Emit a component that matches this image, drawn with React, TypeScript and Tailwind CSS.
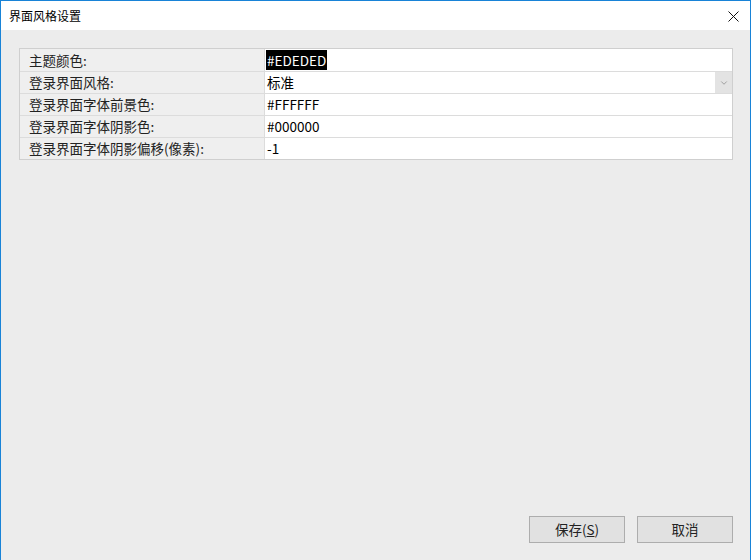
import { ChevronDown } from 'lucide-react'

const rows = [
  { label: '主题颜色:', value: '#EDEDED', selected: true },
  { label: '登录界面风格:', value: '标准', select: true },
  { label: '登录界面字体前景色:', value: '#FFFFFF' },
  { label: '登录界面字体阴影色:', value: '#000000' },
  { label: '登录界面字体阴影偏移(像素):', value: '-1' },
]

const font = { fontFamily: '"Microsoft YaHei", "Noto Sans CJK SC", sans-serif' }

export default function App() {
  return (
    <div className="w-[751px] h-[560px] flex flex-col border border-b-0 border-[#1883d7] bg-[#ececec] text-black" style={font}>
      <div className="h-[29px] bg-white flex items-center justify-between pl-2 pr-[11px] shrink-0">
        <span className="text-[12px]">界面风格设置</span>
        <svg width="11" height="11" viewBox="0 0 11 11" className="mt-[1px]">
          <path d="M0.5 0.5 L10.5 10.5 M10.5 0.5 L0.5 10.5" stroke="#111" strokeWidth="1" />
        </svg>
      </div>
      <div className="flex-1 flex flex-col pt-[18px] pl-[18px] pr-[17px] pb-[17px]">
        <div className="border border-[#cfcfcf] flex flex-col">
          {rows.map((r, i) => (
            <div key={r.label} className={`flex h-[22px] ${i > 0 ? 'border-t border-[#dcdcdc]' : ''}`}>
              <div className="w-[245px] shrink-0 bg-[#efefef] border-r border-[#dcdcdc] flex items-center pl-[9px] text-[13.5px] text-[#222]">
                {r.label}
              </div>
              <div className="flex-1 bg-white flex items-center text-[13.5px] relative">
                {r.selected ? (
                  <span className="bg-black text-white h-[20px] leading-[20px] pl-[1px] pr-[1px] ml-[1px]">{r.value}</span>
                ) : (
                  <span className="pl-[2px]">{r.value}</span>
                )}
                {r.select && (
                  <div className="ml-auto w-[17px] h-full bg-[#e3e3e3] flex items-center justify-center">
                    <ChevronDown size={10} strokeWidth={1.5} color="#777" />
                  </div>
                )}
              </div>
            </div>
          ))}
        </div>
        <div className="flex-1" />
        <div className="flex justify-end gap-[12px]">
          <button className="w-[96px] h-[27px] bg-[#e1e1e1] border border-[#adadad] text-[13.5px] text-[#222]">保存(<span className="underline">S</span>)</button>
          <button className="w-[96px] h-[27px] bg-[#e1e1e1] border border-[#adadad] text-[13.5px] text-[#222]">取消</button>
        </div>
      </div>
    </div>
  )
}
